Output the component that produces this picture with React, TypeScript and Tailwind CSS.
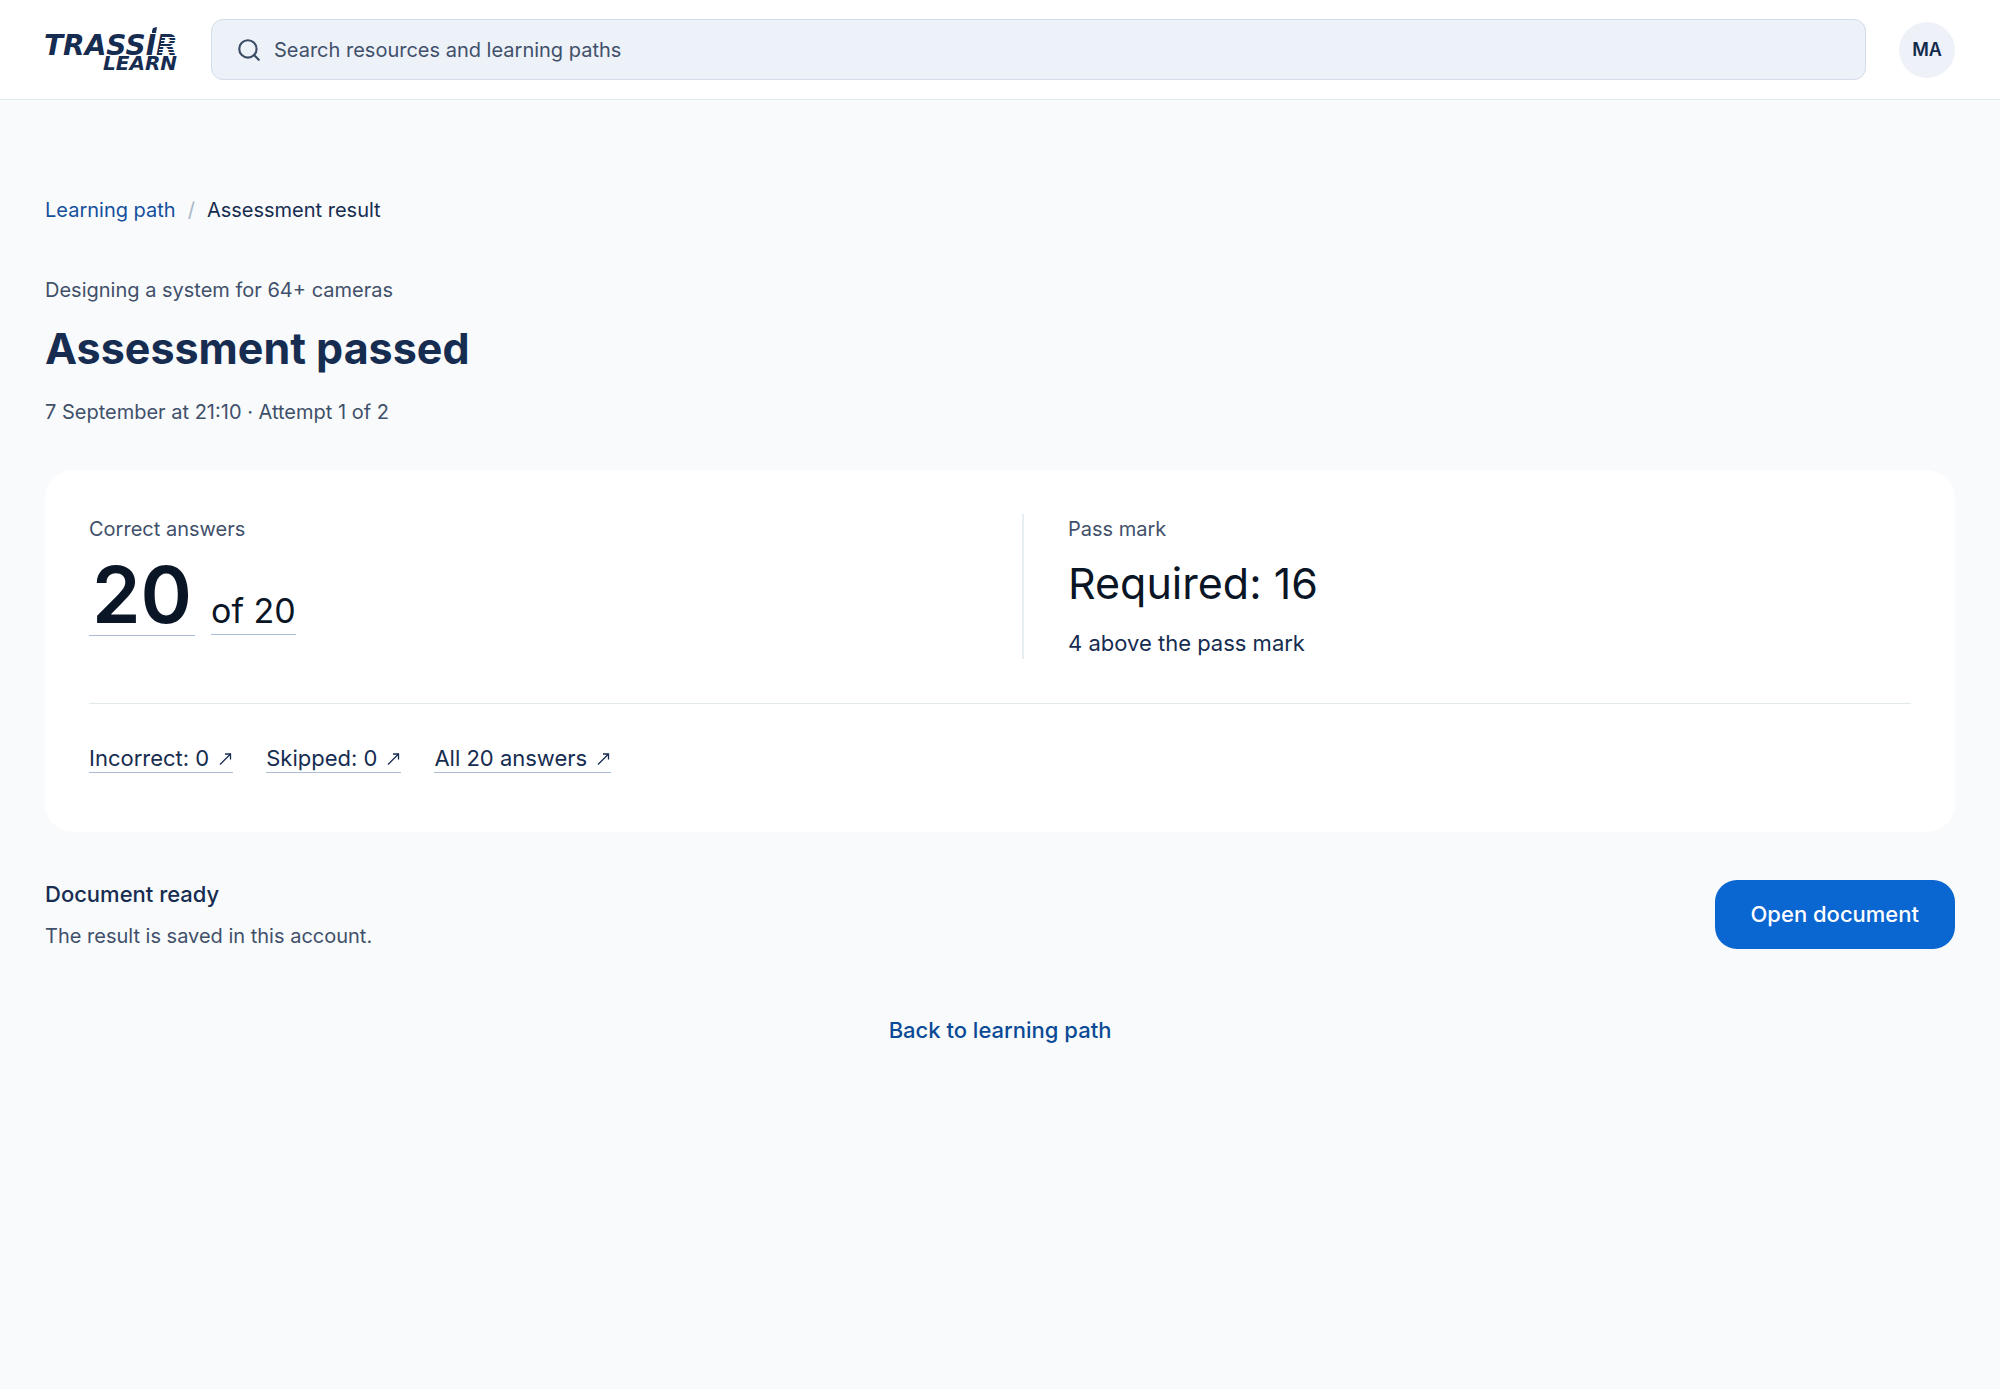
import { Search } from "lucide-react"

const answerLinks = ["Incorrect: 0", "Skipped: 0", "All 20 answers"]

function Logo() {
    return (
        <a href="#" aria-label="TRASSIR Learn" className="shrink-0">
            <svg width="136" height="56" viewBox="0 0 136 56" className="overflow-visible" fill="#162c50" fontFamily="DejaVu Sans" fontWeight="700" fontStyle="italic">
                <text x="-1" y="33" fontSize="28">TRASSIR</text>
                <path d="M107 9l1-3 4-1-1 6h-4z" />
                <path stroke="#fff" d="M117 15.5h20M116 18.5h20M116 21.5h20M115 24.5h20M114 27.5h20M114 30.5h20" />
                <text x="58" y="48" fontSize="20">LEARN</text>
            </svg>
        </a>
    )
}

function Header() {
    return (
        <header className="flex items-center bg-white border-b border-[#dfe9ee] px-[45px] h-[100px]">
            <Logo />
            <label className="flex flex-1 items-center gap-3 ml-[30px] mr-[33px] h-[61px] px-6 rounded-xl border border-[#d3dce8] bg-[#edf1f8]">
                <Search size={26} strokeWidth={2} className="text-[#3d4d66] shrink-0" />
                <input
                    type="search"
                    aria-label="Search"
                    placeholder="Search resources and learning paths"
                    className="flex-1 bg-transparent outline-none text-[20px] placeholder:text-[#41506a] placeholder:opacity-100"
                />
            </label>
            <button className="size-14 rounded-full bg-[#eef2f8] text-[18px] font-semibold text-[#132a4c]">MA</button>
        </header>
    )
}

function Result() {
    return (
        <section className="bg-white rounded-[28px] mt-11 px-11 pt-11 pb-[59px]">
            <div className="grid grid-cols-[933fr_889fr]">
                <div className="pt-px">
                    <p className="text-[20px] leading-7 text-[#41506a]">Correct answers</p>
                    <div className="flex items-baseline gap-4 mt-3 text-[#0a1526]">
                        <a href="#" className="border-b border-[#a9bdd8] px-[3px] text-[78px] leading-[80px] font-semibold">20</a>
                        <a href="#" className="border-b border-[#a9bdd8] text-[34px] leading-[46px]">of 20</a>
                    </div>
                </div>
                <div className="border-l-2 border-[#e8eff2] pl-11 pt-px">
                    <p className="text-[20px] leading-7 text-[#41506a]">Pass mark</p>
                    <p className="mt-3 text-[43px] leading-[56px] text-[#0a1526]">Required: 16</p>
                    <p className="mt-4 text-[22px] leading-8 text-[#162c50]">4 above the pass mark</p>
                </div>
            </div>
            <div className="flex gap-[33px] border-t border-[#e3eaee] mt-11 pt-10 text-[22px] leading-7 text-[#162c50]">
                {answerLinks.map((label) => (
                    <a key={label} href="#" className="flex items-center gap-2 border-b border-[#a9bdd8]">
                        {label}
                        <svg width="16" height="14" viewBox="0 0 16 14" fill="none" stroke="currentColor" strokeWidth="1.3" aria-hidden="true">
                            <path d="M3 13.5L13 3.5M8 3h5.5v5.5" />
                        </svg>
                    </a>
                ))}
            </div>
        </section>
    )
}

export default function App() {
    return (
        <div className="min-h-screen bg-[#f8fafc] font-['Inter',sans-serif] text-[#162c50]">
            <Header />
            <main className="px-[45px] pt-24">
                <nav aria-label="Breadcrumb" className="flex gap-3 text-[20px] leading-7">
                    <a href="#" className="text-[#15509c]">Learning path</a>
                    <span className="text-[#a8b7c9]">/</span>
                    <span>Assessment result</span>
                </nav>
                <p className="mt-[52px] text-[20px] leading-7 text-[#41506a]">Designing a system for 64+ cameras</p>
                <h1 className="mt-4 text-[43px] leading-[56px] font-bold">Assessment passed</h1>
                <p className="mt-[22px] text-[20px] leading-7 text-[#41506a]">7 September at 21:10 · Attempt 1 of 2</p>
                <Result />
                <section className="flex items-center justify-between mt-[46px]">
                    <div>
                        <h2 className="text-[22px] leading-8 font-medium">Document ready</h2>
                        <p className="mt-3 text-[20px] leading-7 text-[#41506a]">The result is saved in this account.</p>
                    </div>
                    <button className="h-[69px] px-9 rounded-[22px] bg-[#0a66d0] text-white text-[22px] font-medium">Open document</button>
                </section>
                <div className="flex justify-center mt-16">
                    <a href="#" className="text-[22px] leading-8 font-medium text-[#0b4a96]">Back to learning path</a>
                </div>
            </main>
        </div>
    )
}
